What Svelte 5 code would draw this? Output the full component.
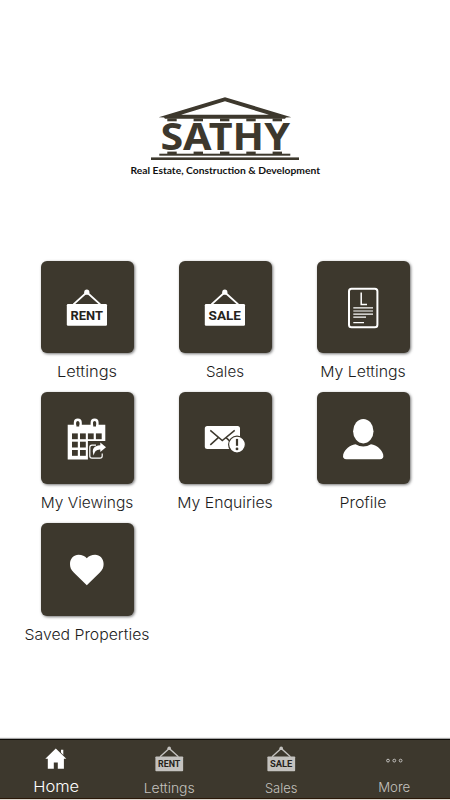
<script>
    const tiles = [
        { label: 'Lettings', width: 60, icon: 'board', text: 'RENT' },
        { label: 'Sales', width: 38, icon: 'board', text: 'SALE' },
        { label: 'My Lettings', width: 85.5, icon: 'document' },
        { label: 'My Viewings', width: 92.5, icon: 'calendar' },
        { label: 'My Enquiries', width: 95.5, icon: 'mail' },
        { label: 'Profile', width: 47, icon: 'person' },
        { label: 'Saved Properties', width: 125, icon: 'heart' }
    ];

    const tabs = [
        { label: 'Home', width: 46, icon: 'home', active: true },
        { label: 'Lettings', width: 51, icon: 'board', text: 'RENT' },
        { label: 'Sales', width: 32.5, icon: 'board', text: 'SALE' },
        { label: 'More', width: 32, icon: 'more', raised: true }
    ];

    const columns = [172, 198.3, 224.7, 251, 277.3];
    const cells = [
        [31, 41], [39, 41], [46.9, 41], [54.9, 41],
        [31, 49.3], [39, 49.3],
        [31, 57.6], [39, 57.6]
    ];
</script>

{#snippet board(text)}
    <path d="M32.5 43 L45.8 31 L59.2 43" class="rope" />
    <circle cx="45.8" cy="30.8" r="2.6" class="fill" />
    <rect x="25.8" y="42.6" width="40.2" height="21.7" rx="1.2" class="fill" />
    <text x="29.6" y="58.5" textLength="32.4" lengthAdjust="spacingAndGlyphs" class="board-text">{text}</text>
{/snippet}

<div class="page">
    <header>
        <svg class="logo" viewBox="120 90 210 95">
            <path fill-rule="evenodd" d="M225 97.2 L291.3 117.2 L286 117.6 L285 118.7 H165 L164 117.6 L158.7 117.2 Z M225 101.2 L181 114.8 H269 Z" />
            {#each columns as x}
                <rect x={x - 4.7} y="118.5" width="9.4" height="2.8" />
                <rect x={x - 4.7} y="151.6" width="9.4" height="2.4" />
            {/each}
            <text x="160.4" y="150" textLength="129.6" lengthAdjust="spacingAndGlyphs" class="brand">SATHY</text>
            <rect x="159.3" y="153.7" width="131" height="2" />
            <rect x="151" y="157.4" width="148" height="2.6" />
            <text x="130.5" y="174.2" textLength="189.5" lengthAdjust="spacingAndGlyphs" class="tagline">Real Estate, Construction &amp; Development</text>
        </svg>
    </header>

    <main>
        {#each tiles as tile}
            <div class="item">
                <div class="tile">
                    <svg viewBox="0 -0.4 92 92">
                        {#if tile.icon === 'board'}
                            {@render board(tile.text)}
                        {:else if tile.icon === 'document'}
                            <rect x="32" y="27.4" width="28.4" height="38.4" rx="2.5" class="line" stroke-width="2" />
                            <path d="M44.2 31 V43 H50" class="line" stroke-width="1.5" />
                            <path d="M36.3 46.5 H56 M36.3 49.6 H56 M36.3 52.7 H56 M36.3 55.8 H49 M36.3 61.3 H47" class="line" stroke-width="1.2" />
                        {:else if tile.icon === 'calendar'}
                            <path d="M26.7 32.3 H64.3 V48.6 H46.9 V67 H26.7 Z" class="fill" />
                            <path d="M34 36 V30.4 Q34 27.4 36.8 27.4 T39.6 30.4 V36 M50.8 36 V30.4 Q50.8 27.4 53.6 27.4 T56.4 30.4 V36" class="line" stroke-width="2.4" />
                            <path d="M36.8 30 V34 M53.6 30 V34" class="cut" stroke-width="2.8" />
                            {#each cells as [x, y]}
                                <rect {x} {y} width="5.8" height="5.8" class="hole" />
                            {/each}
                            <path d="M55 52.8 H51 Q48.8 52.8 48.8 55 V63.6 Q48.8 65.8 51 65.8 H59 Q61.2 65.8 61.2 63.6 V61" class="line" stroke-width="1.2" />
                            <path d="M59.3 50.2 L65 54.8 L59.3 59.7 V57 Q53.6 56.7 52.7 63 Q49.2 53.5 59.3 52.8 Z" class="fill" />
                        {:else if tile.icon === 'mail'}
                            <rect x="25.8" y="33.6" width="35.2" height="23" rx="2.5" class="fill" />
                            <path d="M31.3 38 L43.3 48.2 L55.7 38 M31.3 52.5 L39.3 45.2 M47 45.2 L52 49.7" class="cut" stroke-width="1.5" />
                            <circle cx="58" cy="52.2" r="8.4" class="badge" />
                            <path d="M58 46.5 V53.4" class="cut" stroke-width="2.2" />
                            <circle cx="58" cy="56.5" r="1.4" class="hole" />
                        {:else if tile.icon === 'person'}
                            <ellipse cx="46.3" cy="38.8" rx="10.2" ry="12.2" class="fill" />
                            <path d="M38.5 51.8 Q46.3 56.5 54 51.8 C60 52.5 64.5 57 66.2 62 Q67 66.8 63 66.8 H29.5 Q25.3 66.8 26.2 62 C28 57 32.5 52.5 38.5 51.8 Z" class="fill" />
                        {:else}
                            <path d="M45.8 61.8 L33 49.3 C29.8 46.2 29 43.8 29 40.5 C29 35.3 32.8 31.4 37.5 31.4 C41 31.4 44 32.8 45.8 34.8 C47.6 32.8 50.6 31.4 54.1 31.4 C58.8 31.4 62.6 35.3 62.6 40.5 C62.6 43.8 61.8 46.2 58.6 49.3 Z" class="fill" />
                        {/if}
                    </svg>
                </div>
                <svg class="label" viewBox="0 0 138 26">
                    <text x={69 - tile.width / 2} y="17" textLength={tile.width} lengthAdjust="spacingAndGlyphs">{tile.label}</text>
                </svg>
            </div>
        {/each}
    </main>

    <nav>
        {#each tabs as tab}
            <div class="tab" class:active={tab.active}>
                <svg class="tab-icon" viewBox="0 0 112.5 32">
                    {#if tab.icon === 'home'}
                        <path d="M55.8 8.4 L66.3 18.7 H63.9 V28.8 H57.8 V22.4 H53.8 V28.8 H47.8 V18.7 H45.3 Z M61 9.7 H63.3 V15 L61 12.6 Z" class="fill" />
                    {:else if tab.icon === 'board'}
                        <g transform="translate(24.6 -13) scale(0.69)">
                            {@render board(tab.text)}
                        </g>
                    {:else}
                        {#each [50, 56.3, 62.6] as cx}
                            <circle {cx} cy="20.6" r="1.4" class="line" stroke-width="1" />
                        {/each}
                    {/if}
                </svg>
                <svg class="tab-label" viewBox="0 0 112.5 27">
                    <text x={56.2 - tab.width / 2} y={tab.active || tab.raised ? 19.6 : 20.8} textLength={tab.width} lengthAdjust="spacingAndGlyphs">{tab.label}</text>
                </svg>
            </div>
        {/each}
    </nav>
</div>

<style>
    :global(body) {
        margin: 0;
        background: #fff;
    }

    .page {
        --brown: #3d382d;
        display: flex;
        flex-direction: column;
        width: 450px;
        height: 800px;
        overflow: hidden;
        font-family: Inter, "Open Sans", sans-serif;
    }

    svg {
        display: block;
    }

    header {
        height: 170.7px;
        padding-top: 90px;
    }

    .logo {
        width: 210px;
        height: 95px;
        margin: 0 auto;
        fill: var(--brown);
    }

    .brand {
        font: bold 37.5px "Noto Sans", "Open Sans", sans-serif;
    }

    .tagline {
        font: bold 9.6px Lato, sans-serif;
        fill: #111;
    }

    main {
        flex: 1;
        display: grid;
        grid-template-columns: repeat(3, 138px);
        grid-auto-rows: 131.2px;
        justify-content: center;
    }

    .item {
        display: flex;
        flex-direction: column;
        align-items: center;
    }

    .tile {
        width: 93px;
        height: 92.5px;
        border-radius: 6px;
        background: var(--brown);
        box-shadow: 1px 1px 3px rgba(0, 0, 0, 0.55);
        color: #fff;
    }

    .tile svg {
        width: 92px;
        height: 92px;
    }

    .label {
        width: 138px;
        height: 26px;
        margin-top: 7px;
        font-size: 14.8px;
        font-weight: 300;
        fill: #1c1c1c;
    }

    nav {
        display: grid;
        grid-template-columns: repeat(4, 1fr);
        height: 59px;
        border-top: 1px solid #0c0a06;
        border-bottom: 1px solid #ddd6ce;
        background: var(--brown);
        box-shadow: inset 0 -1px #2a1808, 0 -1px 1px rgba(0, 0, 0, 0.35);
        color: #c4c2bf;
    }

    .active {
        color: #fff;
    }

    .tab-icon {
        width: 112.5px;
        height: 32px;
    }

    .tab-label {
        width: 112.5px;
        height: 27px;
        font-size: 13.6px;
        font-weight: 300;
        fill: currentColor;
    }

    .active .tab-label {
        font-size: 15px;
    }

    .fill {
        fill: currentColor;
    }

    .line,
    .rope {
        fill: none;
        stroke: currentColor;
    }

    .rope {
        stroke-width: 1.9;
    }

    .cut {
        fill: none;
        stroke: var(--brown);
    }

    .hole {
        fill: var(--brown);
    }

    .badge {
        fill: currentColor;
        stroke: var(--brown);
        stroke-width: 1.2;
    }

    .board-text {
        font: bold 12.8px Roboto, sans-serif;
        fill: #26231b;
    }
</style>
